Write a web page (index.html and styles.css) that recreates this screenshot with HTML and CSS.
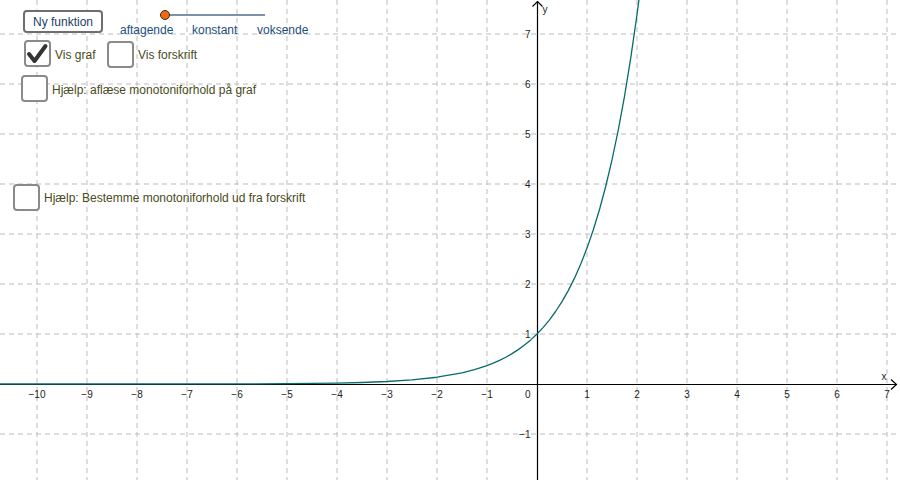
FILE: index.html
```html
<!DOCTYPE html>
<html lang="da">
<head>
<meta charset="utf-8">
<title>Monotoniforhold</title>
<link rel="stylesheet" href="styles.css">
</head>
<body>
<div class="stage">
  <svg class="graph" width="900" height="480" viewBox="0 0 900 480" xmlns="http://www.w3.org/2000/svg">
    <g class="grid">
      <path d="M37 0V480M87 0V480M137 0V480M187 0V480M237 0V480M287 0V480M337 0V480M387 0V480M437 0V480M487 0V480M587 0V480M637 0V480M687 0V480M737 0V480M787 0V480M837 0V480M887 0V480"/>
      <path d="M0 34H900M0 84H900M0 134H900M0 184H900M0 234H900M0 284H900M0 334H900M0 434H900"/>
    </g>
    <g class="axes">
      <path d="M0 384.5H897"/>
      <path d="M891 379.5L896.5 384.5L891 389.5"/>
      <path d="M537.5 480V1"/>
      <path d="M532.5 6.5L537.5 1.5L542.5 6.5"/>
    </g>
    <polyline class="curve" points="-3,384 237,383.88 287,383.66 337,383.08 362,382.49 387,381.51 412,379.9 437,377.23 462,372.84 474.5,369.67 487,365.61 493.25,363.16 499.5,360.38 505.75,357.23 512,353.67 518.25,349.64 524.5,345.06 530.75,339.88 537,334 543.25,327.34 549.5,319.8 555.75,311.25 562,301.56 568.25,290.59 574.5,278.15 580.75,264.06 587,248.09 593.25,229.99 599.5,209.48 605.75,186.25 612,159.92 618.25,130.08 624.5,96.27 630.75,57.96 637,14.55 639.5,-4.4"/>
    <g class="ticks xt">
      <text x="37" y="398">−10</text>
      <text x="87" y="398">−9</text>
      <text x="137" y="398">−8</text>
      <text x="187" y="398">−7</text>
      <text x="237" y="398">−6</text>
      <text x="287" y="398">−5</text>
      <text x="337" y="398">−4</text>
      <text x="387" y="398">−3</text>
      <text x="437" y="398">−2</text>
      <text x="487" y="398">−1</text>
      <text x="587" y="398">1</text>
      <text x="637" y="398">2</text>
      <text x="687" y="398">3</text>
      <text x="737" y="398">4</text>
      <text x="787" y="398">5</text>
      <text x="837" y="398">6</text>
      <text x="887" y="398">7</text>
    </g>
    <g class="ticks yt">
      <text x="530.5" y="398">0</text>
      <text x="530.5" y="37.6">7</text>
      <text x="530.5" y="87.6">6</text>
      <text x="530.5" y="137.6">5</text>
      <text x="530.5" y="187.6">4</text>
      <text x="530.5" y="237.6">3</text>
      <text x="530.5" y="287.6">2</text>
      <text x="530.5" y="337.6">1</text>
      <text x="530.5" y="437.6">−1</text>
    </g>
    <text class="axlabel" x="881.5" y="379.5">x</text>
    <text class="axlabel" x="542.5" y="12.5">y</text>
  </svg>

  <button class="btn w-new">Ny funktion</button>

  <div class="slider w-slider">
    <span class="track"></span>
    <span class="knob"></span>
  </div>
  <span class="sl-label w-aft">aftagende</span>
  <span class="sl-label w-kon">konstant</span>
  <span class="sl-label w-vok">voksende</span>

  <label class="check w-graf">
    <span class="box">
      <svg width="27" height="27" viewBox="0 0 27 27"><path class="tick" d="M5 14L10.5 21L21.5 6"/></svg>
    </span>
    <span class="ctext">Vis graf</span>
  </label>

  <label class="check w-forskrift">
    <span class="box"></span>
    <span class="ctext">Vis forskrift</span>
  </label>

  <label class="check w-help1">
    <span class="box"></span>
    <span class="ctext">Hjælp: aflæse monotoniforhold på graf</span>
  </label>

  <label class="check w-help2">
    <span class="box"></span>
    <span class="ctext">Hjælp: Bestemme monotoniforhold ud fra forskrift</span>
  </label>
</div>
</body>
</html>
```
FILE: styles.css
```css
html, body {
  margin: 0;
  padding: 0;
  background: #ffffff;
  overflow: hidden;
}

.stage {
  position: relative;
  width: 900px;
  height: 480px;
  font-family: "Liberation Sans", Arial, sans-serif;
  font-size: 12px;
  line-height: 14px;
}

.graph {
  position: absolute;
  left: 0;
  top: 0;
  display: block;
}

.grid path {
  fill: none;
  stroke: #bdbdbd;
  stroke-width: 1;
  stroke-dasharray: 5 4;
}

.axes path {
  fill: none;
  stroke: #000000;
  stroke-width: 1.2;
}

.curve {
  fill: none;
  stroke: #0a6b6b;
  stroke-width: 1.3;
  stroke-linejoin: round;
}

.ticks text,
.axlabel {
  font-family: "Liberation Sans", Arial, sans-serif;
  font-size: 10px;
  fill: #222222;
}

.xt text {
  text-anchor: middle;
}

.yt text {
  text-anchor: end;
}

/* widgets placed on the applet canvas */
.btn {
  position: absolute;
  left: 23px;
  top: 10px;
  width: 80px;
  height: 23px;
  box-sizing: border-box;
  padding: 0;
  margin: 0;
  border: 2px solid #6e6e6e;
  border-radius: 4px;
  background: #ffffff;
  color: #1b3f66;
  font-family: "Liberation Sans", Arial, sans-serif;
  font-size: 12px;
  line-height: 18px;
}

.slider {
  position: absolute;
  left: 160px;
  top: 10px;
  width: 106px;
  height: 10px;
}

.track {
  position: absolute;
  left: 5px;
  top: 4px;
  width: 100px;
  height: 2px;
  background: #7a93ab;
}

.knob {
  position: absolute;
  left: 0;
  top: 0;
  width: 8px;
  height: 8px;
  border: 1px solid #3a2a1a;
  border-radius: 50%;
  background: #f06a10;
}

.sl-label {
  position: absolute;
  top: 23px;
  color: #1d4f7a;
  white-space: nowrap;
}

.w-aft { left: 120px; }
.w-kon { left: 192px; }
.w-vok { left: 257px; }

.check {
  position: absolute;
  display: flex;
  align-items: center;
  gap: 4px;
  white-space: nowrap;
}

.box {
  width: 27px;
  height: 27px;
  box-sizing: border-box;
  border: 2px solid #8a8a8a;
  border-radius: 4px;
  background: #ffffff;
  flex: none;
  position: relative;
}

.box svg {
  position: absolute;
  left: -2px;
  top: -2px;
}

.tick {
  fill: none;
  stroke: #333333;
  stroke-width: 4;
  stroke-linecap: round;
  stroke-linejoin: round;
}

.ctext {
  color: #4a4a1c;
}

.w-graf { left: 24px; top: 40px; }
.w-graf .ctext { margin-top: 3px; }
.w-forskrift { left: 107px; top: 41px; }
.w-forskrift .ctext { margin-top: 1px; }
.w-help1 { left: 21px; top: 75px; }
.w-help1 .ctext { margin-top: 2px; }
.w-help2 { left: 13px; top: 184px; }
.w-help2 .ctext { margin-top: 1px; }
```
